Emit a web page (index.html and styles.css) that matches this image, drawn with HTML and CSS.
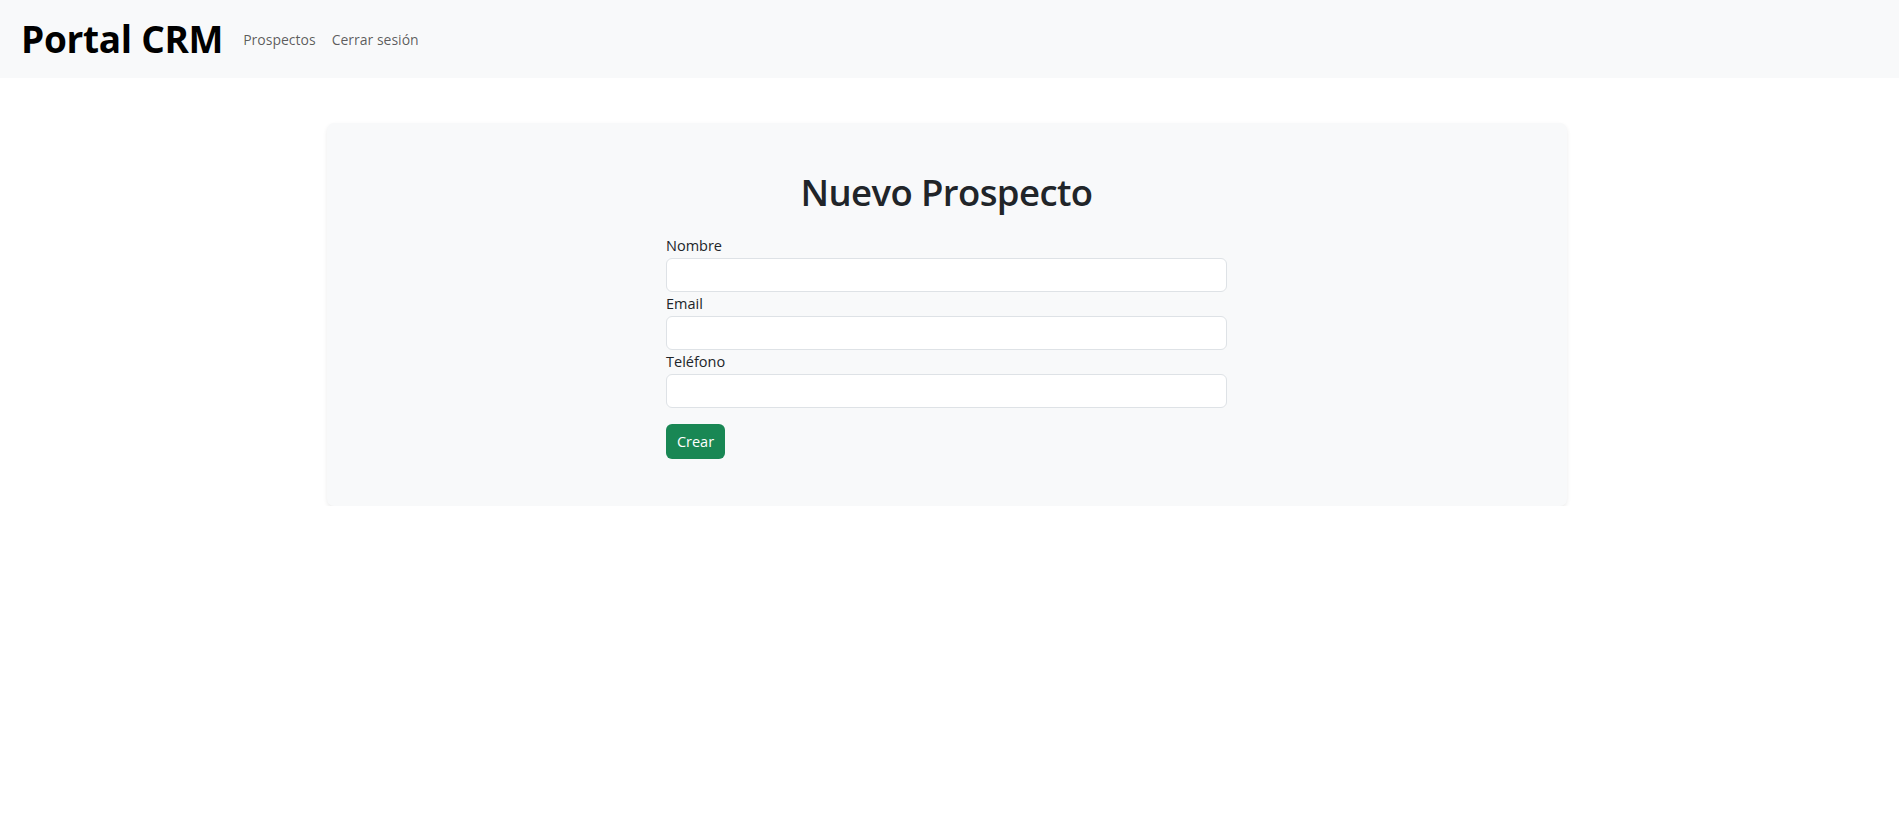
FILE: index.html
```html
<!DOCTYPE html>
<html lang="es">
<head>
<meta charset="utf-8">
<title>Portal CRM</title>
<link rel="stylesheet" href="styles.css">
</head>
<body>
<nav class="navbar">
  <a class="brand" href="#">Portal CRM</a>
  <div class="nav-links">
    <a class="nav-link" href="#">Prospectos</a>
    <a class="nav-link" href="#">Cerrar sesión</a>
  </div>
</nav>
<main class="main">
  <section class="card">
    <h1 class="title">Nuevo Prospecto</h1>
    <form class="form">
      <label class="label" for="nombre">Nombre</label>
      <input class="input" id="nombre" type="text">
      <label class="label" for="email">Email</label>
      <input class="input" id="email" type="email">
      <label class="label" for="telefono">Teléfono</label>
      <input class="input" id="telefono" type="text">
      <button class="btn" type="button">Crear</button>
    </form>
  </section>
</main>
</body>
</html>
```
FILE: styles.css
```css
* { box-sizing: border-box; }
html, body { margin: 0; padding: 0; }
body {
  font-family: "Open Sans", "Noto Sans", sans-serif;
  color: #212529;
  background: #fff;
}
.navbar {
  height: 78px;
  background: #f8f9fa;
  display: flex;
  align-items: center;
  padding: 0 21px;
}
.brand {
  font-size: 37px;
  font-weight: 700;
  color: #000;
  text-decoration: none;
  margin-right: 12px;
  line-height: 1.2;
  letter-spacing: -0.3px;
}
.nav-links {
  display: flex;
  padding-top: 2px;
}
.nav-link {
  font-size: 14px;
  color: rgba(0,0,0,.65);
  text-decoration: none;
  padding: 0 8px;
  line-height: 24px;
}
.main {
  padding-top: 45px;
}
.card {
  width: 1240px;
  margin-left: calc(50% - 623px);
  background: #f8f9fa;
  border-radius: 7px;
  box-shadow: 0 2px 4px rgba(0,0,0,.08);
  padding: 46px 0 47px;
}
.title {
  margin: 0 0 19px;
  font-size: 36.5px;
  line-height: 46px;
  font-weight: 600;
  text-align: center;
  color: #212529;
  letter-spacing: -0.6px;
}
.form {
  width: 561px;
  margin: 0 auto;
  display: flex;
  flex-direction: column;
  align-items: flex-start;
}
.label {
  font-size: 14.5px;
  line-height: 24px;
  color: #212529;
}
.input {
  display: block;
  width: 100%;
  height: 34px;
  border: 1px solid #dee2e6;
  border-radius: 6px;
  background: #fff;
  padding: 4px 12px;
  font: inherit;
  font-size: 14px;
}
.btn {
  margin-top: 16px;
  width: 59px;
  height: 35px;
  border: 0;
  border-radius: 6px;
  background: #198754;
  color: #fff;
  font-family: inherit;
  font-size: 14.5px;
  padding: 0;
}
```
